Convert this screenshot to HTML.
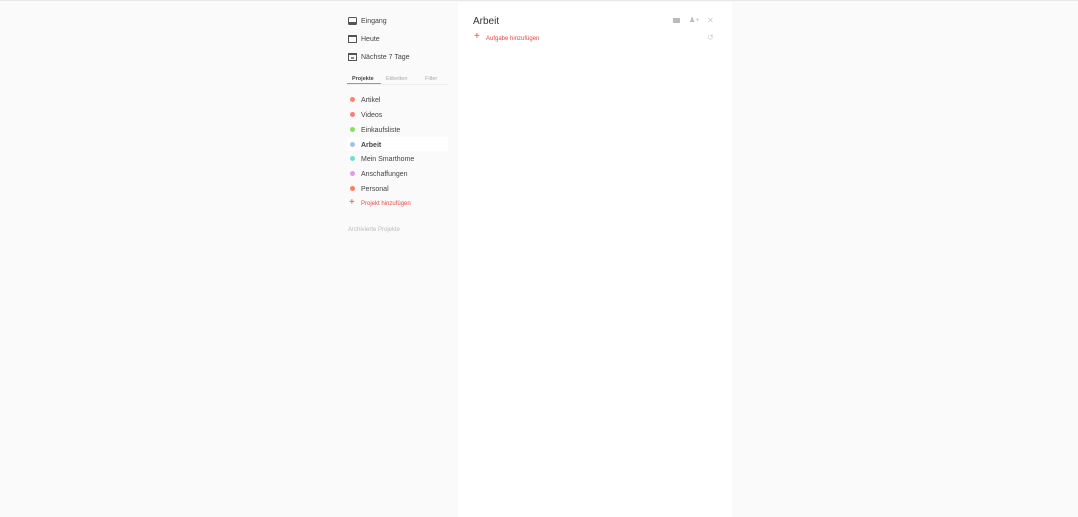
<!DOCTYPE html>
<html><head><meta charset="utf-8"><style>
*{margin:0;padding:0;box-sizing:border-box}
body{width:1078px;height:516px;background:#fafafa;font-family:"Liberation Sans",sans-serif;position:relative;overflow:hidden;border-top:1px solid #e8e8e8}
.main{position:absolute;left:458px;top:1px;width:274px;height:515px;background:#fff}
.t{position:absolute;font-size:7px;color:#444;line-height:9px}
.ic{position:absolute}
.dot{position:absolute;width:5px;height:5px;border-radius:50%}
</style></head><body>
<svg class="ic" style="left:348px;top:16px" width="9" height="8" viewBox="0 0 9 8"><rect x="0.5" y="0.5" width="8" height="7" rx="1" fill="none" stroke="#555"/><rect x="0.5" y="5" width="8" height="2.5" fill="#555"/></svg>
<div class="t" style="left:361px;top:16px">Eingang</div>
<svg class="ic" style="left:348px;top:34px" width="9" height="8" viewBox="0 0 9 8"><rect x="0.5" y="0.5" width="8" height="7" fill="none" stroke="#555"/><rect x="0.5" y="0.5" width="8" height="1.5" fill="#555"/></svg>
<div class="t" style="left:361px;top:34px">Heute</div>
<svg class="ic" style="left:348px;top:52px" width="9" height="8" viewBox="0 0 9 8"><rect x="0.5" y="0.5" width="8" height="7" fill="none" stroke="#555"/><rect x="0.5" y="0.5" width="8" height="1.5" fill="#555"/><rect x="3" y="4" width="3" height="2" fill="#888"/></svg>
<div class="t" style="left:361px;top:52px">Nächste 7 Tage</div>
<div class="t" style="left:352px;top:74px;font-size:5.5px;font-weight:bold;color:#444">Projekte</div>
<div class="t" style="left:386px;top:74px;font-size:5.5px;color:#aaa">Etiketten</div>
<div class="t" style="left:425px;top:74px;font-size:5.5px;color:#aaa">Filter</div>
<div style="position:absolute;left:347px;top:83px;width:101px;height:1px;background:#eee"></div>
<div style="position:absolute;left:347px;top:82px;width:34px;height:1px;background:#999"></div>
<div class="dot" style="left:350px;top:96px;background:#ff8170"></div><div class="t" style="left:361px;top:95px">Artikel</div>
<div class="dot" style="left:350px;top:111px;background:#ff7b7b"></div><div class="t" style="left:361px;top:110px">Videos</div>
<div class="dot" style="left:350px;top:126px;background:#86e060"></div><div class="t" style="left:361px;top:125px">Einkaufsliste</div>
<div style="position:absolute;left:347px;top:136px;width:101px;height:14px;background:#fff"></div>
<div class="dot" style="left:350px;top:141px;background:#a4c2e6"></div><div class="t" style="left:361px;top:140px;font-weight:bold">Arbeit</div>
<div class="dot" style="left:350px;top:155px;background:#6ee0d0"></div><div class="t" style="left:361px;top:154px">Mein Smarthome</div>
<div class="dot" style="left:350px;top:170px;background:#e29ae8"></div><div class="t" style="left:361px;top:169px">Anschaffungen</div>
<div class="dot" style="left:350px;top:185px;background:#ff7d5c"></div><div class="t" style="left:361px;top:184px">Personal</div>
<div class="t" style="left:349px;top:197px;color:#e44;font-size:10px">+</div><div class="t" style="left:361px;top:199px;color:#e44;font-size:6px">Projekt hinzufügen</div>
<div class="t" style="left:348px;top:225px;color:#bbb;font-size:6px">Archivierte Projekte</div>
<div class="main"></div>
<div class="t" style="left:473px;top:15px;font-size:10px;line-height:12px;color:#333">Arbeit</div>
<div class="t" style="left:474px;top:31px;color:#e44;font-size:10px">+</div><div class="t" style="left:486px;top:34px;color:#e44;font-size:6px">Aufgabe hinzufügen</div>
<svg class="ic" style="left:673px;top:17px" width="7" height="6"><rect width="7" height="5" fill="#bbb"/></svg>
<div class="t" style="left:689px;top:15px;color:#bbb;font-size:7px">&#9823;+</div>
<div class="t" style="left:707px;top:15px;color:#ccc;font-size:8px">✕</div>
<div class="t" style="left:707px;top:32px;color:#ccc;font-size:8px">↺</div>
</body></html>
